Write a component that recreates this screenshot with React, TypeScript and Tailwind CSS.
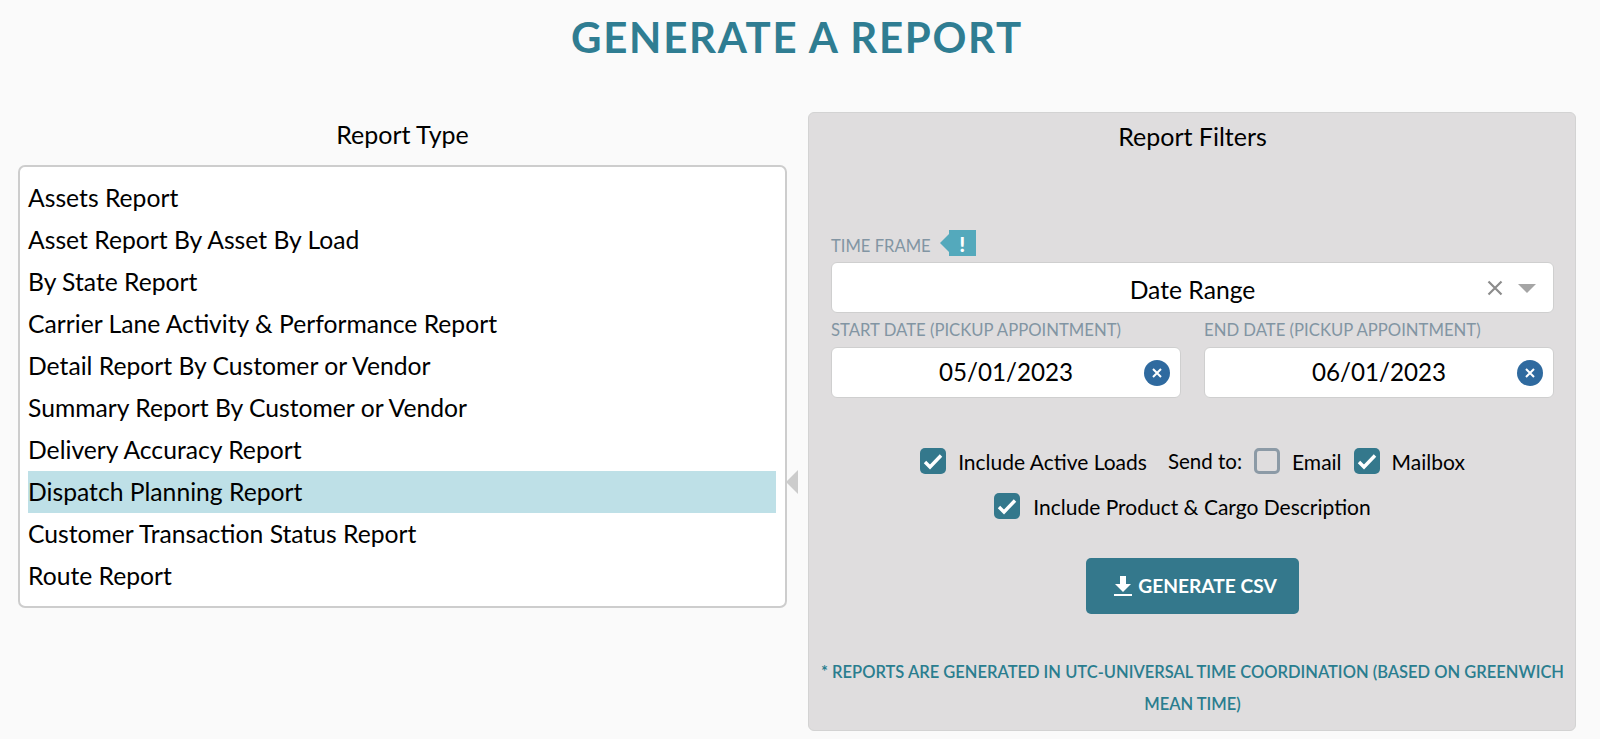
import React from "react";

const reports = [
  "Assets Report",
  "Asset Report By Asset By Load",
  "By State Report",
  "Carrier Lane Activity & Performance Report",
  "Detail Report By Customer or Vendor",
  "Summary Report By Customer or Vendor",
  "Delivery Accuracy Report",
  "Dispatch Planning Report",
  "Customer Transaction Status Report",
  "Route Report",
];

function Check({ checked = true }: { checked?: boolean }) {
  if (!checked) {
    return <span className="block w-[26px] h-[26px] rounded-[5px] border-[3px] border-[#8c9aa6] bg-[#dfddde] shrink-0" />;
  }
  return (
    <span className="block w-[26px] h-[26px] rounded-[5px] bg-[#34788c] shrink-0">
      <svg width="26" height="26" viewBox="0 0 26 26" fill="none">
        <path d="M5 14l5 5 11-11.5" stroke="#fff" strokeWidth="3.4" />
      </svg>
    </span>
  );
}

function ClearDot() {
  return (
    <span className="flex items-center justify-center w-[26px] h-[26px] rounded-full bg-[#2f6a9f]">
      <svg width="10" height="10" viewBox="0 0 10 10" fill="none">
        <path d="M1 1l8 8M9 1l-8 8" stroke="#fff" strokeWidth="2" />
      </svg>
    </span>
  );
}

function DateField({ label, value }: { label: string; value: string }) {
  return (
    <div className="flex-1">
      <div className="text-[16.7px] leading-[20px] text-[#8295a3] h-[34px] pt-[7px] whitespace-nowrap">{label}</div>
      <div className="relative h-[51px] bg-white rounded-[6px] border border-[#cfcfcf] flex items-center justify-center text-[24.2px] text-black">
        {value}
        <span className="absolute right-[10px] top-[12px]">
          <ClearDot />
        </span>
      </div>
    </div>
  );
}

export default function App() {
  return (
    <div className="min-h-[739px] bg-[#fafafa] font-['Lato',sans-serif] text-black overflow-hidden">
      <h1 className="text-center text-[42px] leading-[48px] font-bold tracking-[1.7px] text-[#2f7d92] pt-[13px] pr-[6px]">
        GENERATE A REPORT
      </h1>
      <div className="flex gap-[21px] pl-[18px] pr-[24px] pt-[51px]">
        <div className="w-[769px]">
          <div className="text-center text-[25px] leading-[30px] pt-[7px] h-[53px]">Report Type</div>
          <div className="relative h-[443px] bg-white border-2 border-[#cdcdcd] rounded-[7px] pt-[10px] pl-[8px] pr-[9px]">
            {reports.map((r) => (
              <div
                key={r}
                className={`h-[42px] flex items-center text-[24.7px] whitespace-nowrap ${
                  r === "Dispatch Planning Report" ? "bg-[#bee0e7]" : ""
                }`}
              >
                {r}
              </div>
            ))}
            <span className="absolute right-[-13px] top-[303px] w-0 h-0 border-y-[12px] border-y-transparent border-r-[12px] border-r-[#cccccc]" />
          </div>
        </div>
        <div className="flex-1 h-[619px] bg-[#dfddde] rounded-[6px] border border-[#d3d3d3] pl-[22px] pr-[21px]">
          <div className="text-center text-[25px] leading-[30px] pt-[8px] h-[117px]">Report Filters</div>
          <div className="flex items-center h-[32px] text-[16.6px] text-[#8295a3]">
            TIME FRAME
            <span className="relative ml-[18px] mb-[6px] flex items-center justify-center w-[27px] h-[26px] bg-[#54a9bc] text-white font-black text-[21px] leading-none">
              !
              <span className="absolute left-[-9px] top-[4px] w-0 h-0 border-y-[9px] border-y-transparent border-r-[9px] border-r-[#54a9bc]" />
            </span>
          </div>
          <div className="relative h-[51px] bg-white rounded-[6px] border border-[#cfcfcf] flex items-center justify-center text-[24.7px] pt-[5px]">
            Date Range
            <svg className="absolute right-[50px] top-[17px]" width="16" height="16" viewBox="0 0 16 16" fill="none">
              <path d="M1.5 1.5l13 13M14.5 1.5l-13 13" stroke="#8c8c8c" strokeWidth="2.2" />
            </svg>
            <span className="absolute right-[17px] top-[21px] w-0 h-0 border-x-[9px] border-x-transparent border-t-[9px] border-t-[#a5a5a5]" />
          </div>
          <div className="flex gap-[23px]">
            <DateField label="START DATE (PICKUP APPOINTMENT)" value="05/01/2023" />
            <DateField label="END DATE (PICKUP APPOINTMENT)" value="06/01/2023" />
          </div>
          <div className="flex items-center justify-center h-[26px] mt-[50px] text-[21px] leading-none">
            <Check />
            <span className="ml-[12px]">Include Active Loads</span>
            <span className="ml-[21px] text-[20.5px]">Send to:</span>
            <span className="ml-[12px]"><Check checked={false} /></span>
            <span className="ml-[12px]">Email</span>
            <span className="ml-[12px]"><Check /></span>
            <span className="ml-[12px]">Mailbox</span>
          </div>
          <div className="flex items-center justify-center h-[26px] mt-[19px] text-[21px] leading-none pr-[20px]">
            <Check />
            <span className="ml-[13px]">Include Product &amp; Cargo Description</span>
          </div>
          <div className="flex justify-center mt-[39px]">
            <div className="flex items-center justify-center gap-[5px] w-[213px] h-[56px] pl-[5px] bg-[#34788c] rounded-[5px] text-white text-[19.2px] font-bold">
              <svg width="20" height="22" viewBox="0 0 20 22" fill="#fff">
                <path d="M7 1h6v8h5l-8 8-8-8h5z" />
                <path d="M1 19h18v2H1z" />
              </svg>
              GENERATE CSV
            </div>
          </div>
          <p className="mt-[42px] -mx-[12px] text-center text-[16.5px] leading-[32px] text-[#2a7d8f] font-semibold">
            * REPORTS ARE GENERATED IN UTC-UNIVERSAL TIME COORDINATION (BASED ON GREENWICH MEAN TIME)
          </p>
        </div>
      </div>
    </div>
  );
}
